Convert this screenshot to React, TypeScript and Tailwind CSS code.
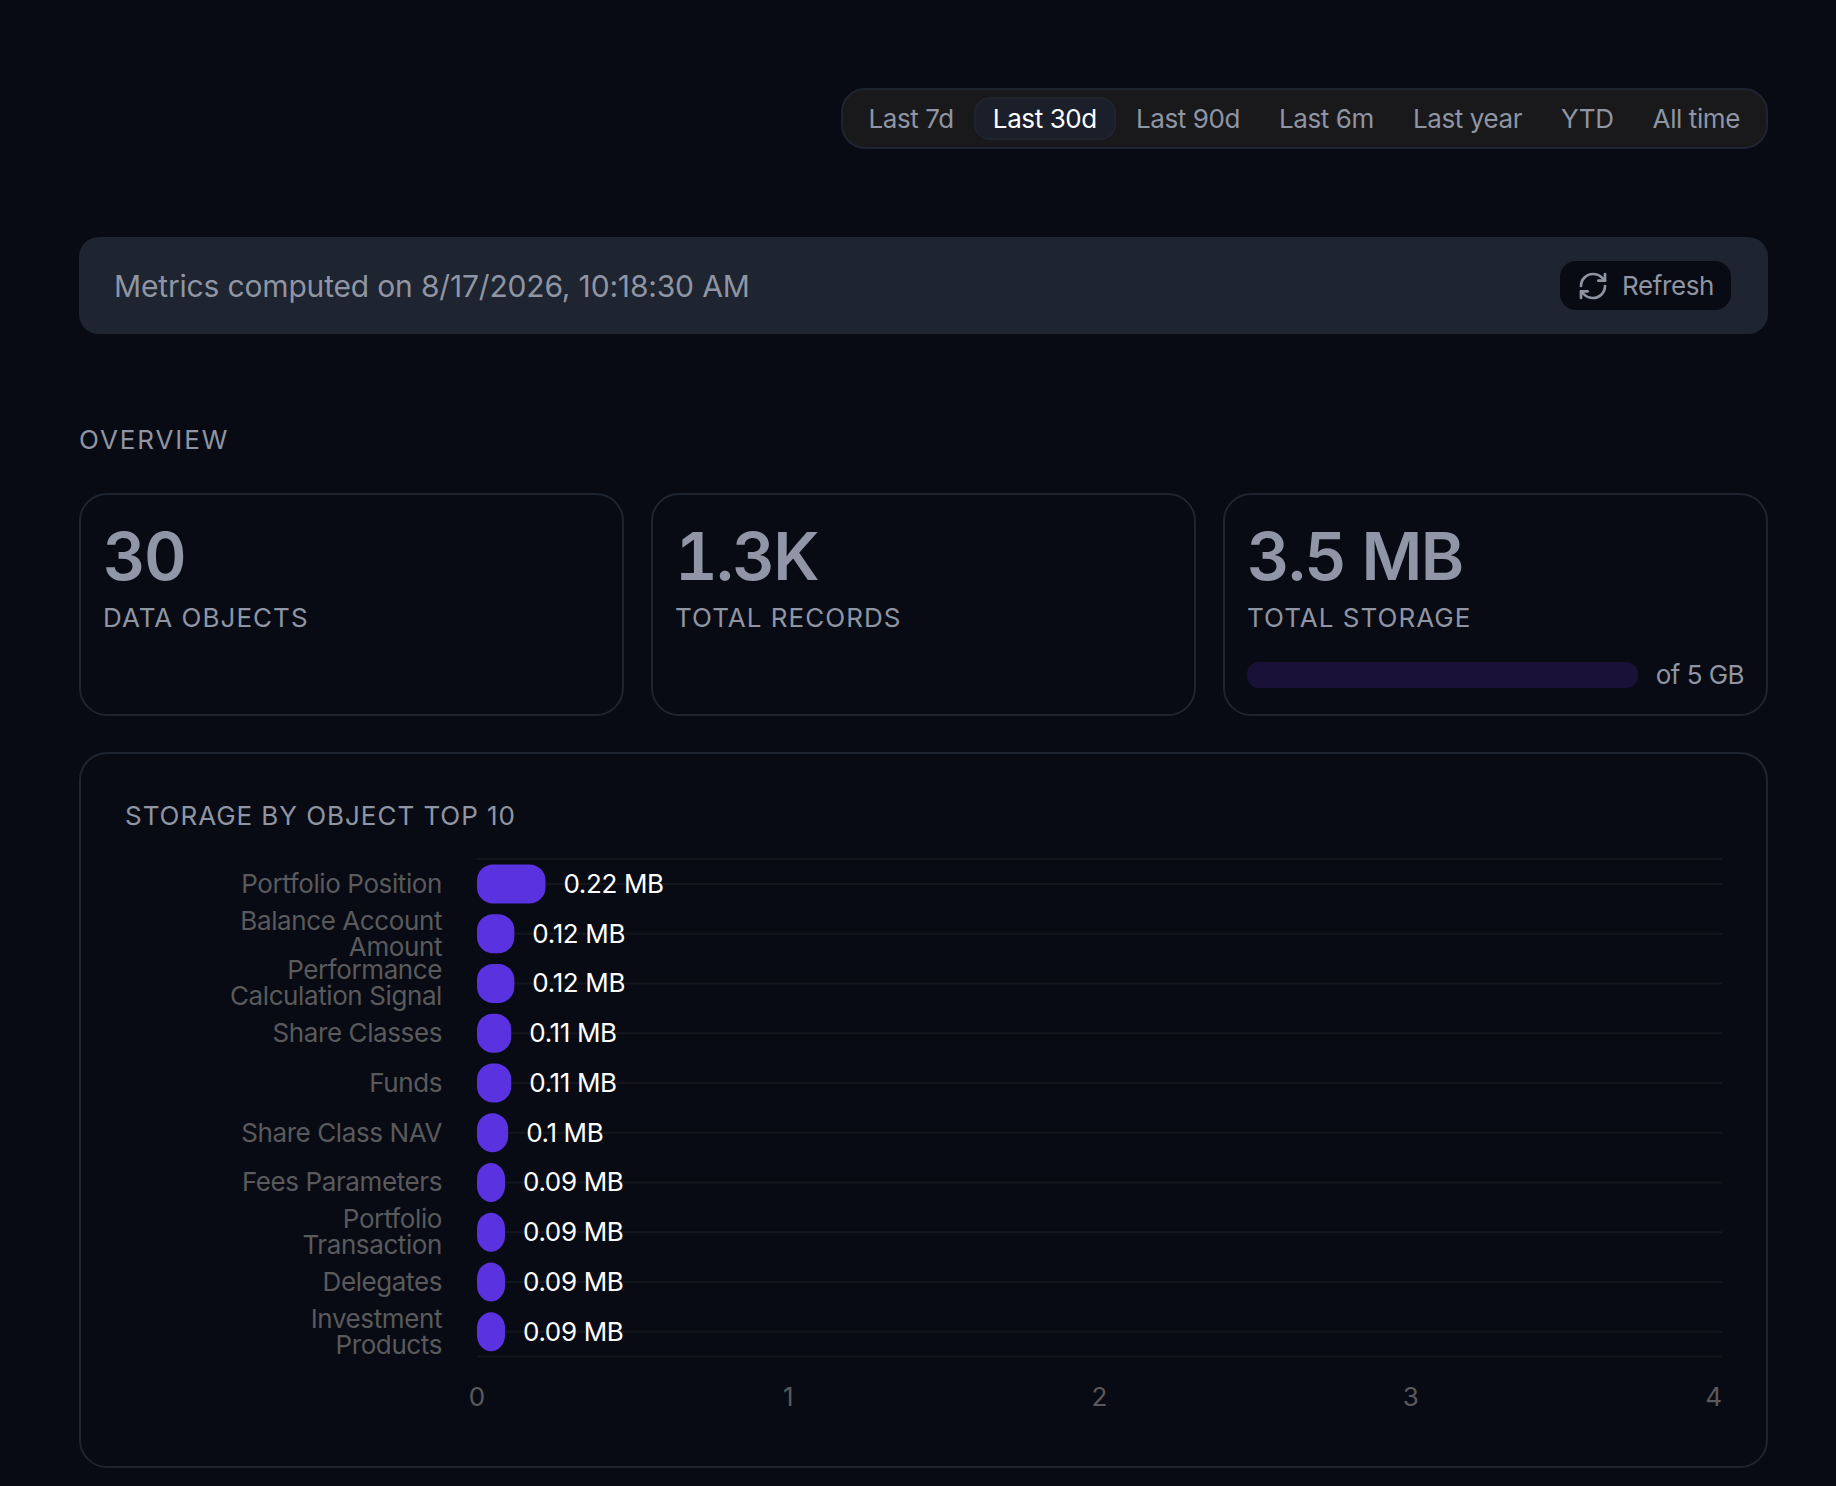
import React from 'react';
import { RefreshCw } from 'lucide-react';

const ranges = ['Last 7d', 'Last 30d', 'Last 90d', 'Last 6m', 'Last year', 'YTD', 'All time'];

const rows = [
	{ label: ['Portfolio Position'], value: '0.22 MB', mb: 0.22 },
	{ label: ['Balance Account', 'Amount'], value: '0.12 MB', mb: 0.12 },
	{ label: ['Performance', 'Calculation Signal'], value: '0.12 MB', mb: 0.12 },
	{ label: ['Share Classes'], value: '0.11 MB', mb: 0.11 },
	{ label: ['Funds'], value: '0.11 MB', mb: 0.11 },
	{ label: ['Share Class NAV'], value: '0.1 MB', mb: 0.1 },
	{ label: ['Fees Parameters'], value: '0.09 MB', mb: 0.09 },
	{ label: ['Portfolio', 'Transaction'], value: '0.09 MB', mb: 0.09 },
	{ label: ['Delegates'], value: '0.09 MB', mb: 0.09 },
	{ label: ['Investment', 'Products'], value: '0.09 MB', mb: 0.09 },
];

const plotLeft = 352;
const plotWidth = 1245;
const rowHeight = 49.75;
const plotTop = 6;
const labelX = 317;

function StorageChart() {
	return (
		<svg width="1640" height="560" className="block">
			<line x1={plotLeft} x2={plotLeft + plotWidth} y1={plotTop} y2={plotTop} className="stroke-[#14161d] stroke-2" />
			{rows.map((row, i) => {
				const cy = plotTop + rowHeight * (i + 0.5);
				const w = row.mb * (plotWidth / 4);
				return (
					<g key={i}>
						<line x1={plotLeft} x2={plotLeft + plotWidth} y1={cy} y2={cy} className="stroke-[#14161d] stroke-2" />
						<rect x={plotLeft} y={cy - 19.5} width={w} height={39} rx={16} className="fill-[#5b32e0]" />
						{row.label.length === 1 ? (
							<text x={labelX} y={cy + 9} textAnchor="end" className="fill-[#5a5a5c] text-[26px] tracking-[-0.4px]">
								{row.label[0]}
							</text>
						) : (
							<text textAnchor="end" className="fill-[#5a5a5c] text-[26px] tracking-[-0.4px]">
								<tspan x={labelX} y={cy - 4}>{row.label[0]}</tspan>
								<tspan x={labelX} y={cy + 22}>{row.label[1]}</tspan>
							</text>
						)}
						<text x={plotLeft + w + 18} y={cy + 9} className="fill-white text-[26px] tracking-[-0.35px]">
							{row.value}
						</text>
					</g>
				);
			})}
			<line x1={plotLeft} x2={plotLeft + plotWidth} y1={plotTop + rowHeight * 10} y2={plotTop + rowHeight * 10} className="stroke-[#14161d] stroke-2" />
			{[0, 1, 2, 3, 4].map((t) => (
				<text
					key={t}
					x={plotLeft + (plotWidth / 4) * t}
					y={plotTop + rowHeight * 10 + 49}
					textAnchor={t === 4 ? 'end' : 'middle'}
					className="fill-[#5a5a5c] text-[26px]"
				>
					{t}
				</text>
			))}
		</svg>
	);
}

function StatCard({ value, label, children }: { value: string; label: string; children?: React.ReactNode }) {
	return (
		<div className="h-[223px] rounded-[28px] border-2 border-[#1e2430] px-[22px] pt-[21px]">
			<div className="text-[66px] font-semibold leading-[80px] tabular-nums tracking-[-1.6px] text-[#9096a5]">{value}</div>
			<div className="mt-[4px] text-[26px] leading-[36px] tracking-[1.03px] text-[#8f95a3]">{label}</div>
			{children}
		</div>
	);
}

export default function App() {
	return (
		<div className="min-h-[1486px] bg-[#080b14] pl-[79px] pr-[68px] pt-[88px] font-['Inter',sans-serif]">
			<div className="flex justify-end">
				<div className="flex h-[61px] items-center gap-[1px] rounded-[24px] border-2 border-[#1e2430] bg-[#19191b] px-[7px]">
					{ranges.map((r) =>
						r === 'Last 30d' ? (
							<div
								key={r}
								className="flex h-[43px] items-center rounded-[16px] border-2 border-[#1e2430] bg-[#1a1f2a] px-[17px] text-[26px] tracking-[-0.4px] text-white"
							>
								{r}
							</div>
						) : (
							<div key={r} className="flex h-[43px] items-center px-[19px] text-[26px] tracking-[-0.4px] text-[#8f95a3]">
								{r}
							</div>
						),
					)}
				</div>
			</div>

			<div className="mt-[88px] flex h-[97px] items-center justify-between rounded-[20px] bg-[#1e2430] pl-[35px] pr-[37px]">
				<span className="pt-[2px] text-[30px] tracking-[-0.17px] text-[#8f95a3]">Metrics computed on 8/17/2026, 10:18:30 AM</span>
				<button className="flex h-[49px] w-[171px] items-center justify-center gap-[13px] rounded-[16px] bg-[#080b14] text-[26px] tracking-[-0.4px] text-[#8f95a3]">
					<RefreshCw size={32} strokeWidth={2} />
					Refresh
				</button>
			</div>

			<h2 className="mt-[90px] text-[26px] leading-[32px] tracking-[1.9px] text-[#8f95a3]">OVERVIEW</h2>

			<div className="mt-[37px] grid grid-cols-3 gap-[27px]">
				<StatCard value="30" label="DATA OBJECTS" />
				<StatCard value="1.3K" label="TOTAL RECORDS" />
				<StatCard value="3.5 MB" label="TOTAL STORAGE">
					<div className="mt-[26px] flex items-center gap-[18px]">
						<div className="h-[26px] flex-1 rounded-[12px] bg-[#1a1138]" />
						<span className="text-[26px] leading-[26px] tracking-[-0.55px] text-[#8f95a3]">of 5 GB</span>
					</div>
				</StatCard>
			</div>

			<div className="mt-[36px] h-[716px] rounded-[28px] border-2 border-[#1e2430] pl-[44px] pt-[46px]">
				<h3 className="text-[26px] leading-[32px] tracking-[0.96px] text-[#8f95a3]">STORAGE BY OBJECT TOP 10</h3>
				<div className="mt-[21px]">
					<StorageChart />
				</div>
			</div>
		</div>
	);
}
